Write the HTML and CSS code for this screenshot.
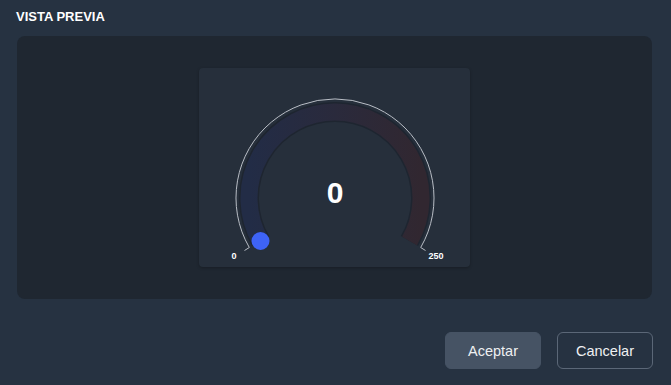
FILE: index.html
```html
<!DOCTYPE html>
<html>
<head>
<meta charset="utf-8">
<link rel="stylesheet" href="styles.css">
</head>
<body>
<div class="dialog">
  <div class="title">VISTA PREVIA</div>
  <div class="preview">
    <div class="card">
      <svg class="gauge" width="271" height="199" viewBox="0 0 271 199">
        <defs>
          <linearGradient id="band" x1="0" y1="0" x2="1" y2="0">
            <stop offset="0" stop-color="#222c46"/>
            <stop offset="0.5" stop-color="#2a2a3c"/>
            <stop offset="1" stop-color="#312730"/>
          </linearGradient>
        </defs>
        <path d="M61.5 173 A86 86 0 1 1 210.5 173" fill="none" stroke="#1e2530" stroke-width="20"/>
        <path d="M61.5 173 A86 86 0 1 1 210.5 173" fill="none" stroke="url(#band)" stroke-width="17"/>
        <path d="M45.5 182.5 L50.3 179.5 A99 99 0 1 1 221.7 179.5 L226.5 182.5" fill="none" stroke="#b9bec6" stroke-width="1"/>
        <circle cx="61.5" cy="173" r="9" fill="#3e63f6"/>
        <text x="136" y="135" class="value" text-anchor="middle">0</text>
        <text x="35" y="191" class="lbl" text-anchor="middle">0</text>
        <text x="237" y="191" class="lbl" text-anchor="middle">250</text>
      </svg>
    </div>
  </div>
  <div class="actions">
    <button class="btn primary">Aceptar</button>
    <button class="btn outline">Cancelar</button>
  </div>
</div>
</body>
</html>
```
FILE: styles.css
```css
html, body {
  margin: 0;
  padding: 0;
  background: #263241;
  font-family: "Liberation Sans", Arial, sans-serif;
}
.dialog {
  width: 671px;
  height: 385px;
  box-sizing: border-box;
  padding: 9px 19px 0 17px;
  display: flex;
  flex-direction: column;
}
.title {
  color: #ffffff;
  font-weight: bold;
  font-size: 13px;
  line-height: 15px;
  margin-left: -1px;
}
.preview {
  margin-top: 12px;
  height: 263px;
  background: #1f2731;
  border-radius: 8px;
  display: flex;
  justify-content: center;
  align-items: center;
}
.card {
  width: 271px;
  height: 199px;
  background: #262f3b;
  border-radius: 4px;
  box-shadow: 0 1px 3px rgba(0,0,0,0.25);
}
.gauge {
  display: block;
}
.value {
  fill: #ffffff;
  font-family: "Liberation Sans", Arial, sans-serif;
  font-weight: bold;
  font-size: 30px;
}
.lbl {
  fill: #ffffff;
  font-family: "Liberation Sans", Arial, sans-serif;
  font-weight: bold;
  font-size: 9px;
}
.actions {
  margin-top: 33px;
  display: flex;
  justify-content: flex-end;
  gap: 16px;
  margin-right: -1px;
}
.btn {
  width: 96px;
  height: 37px;
  border-radius: 6px;
  font-family: "Liberation Sans", Arial, sans-serif;
  font-size: 14.5px;
  color: #eef0f2;
  cursor: pointer;
}
.primary {
  background: #465364;
  border: 1px solid #465364;
}
.outline {
  background: transparent;
  border: 1px solid #5b6777;
}
```
